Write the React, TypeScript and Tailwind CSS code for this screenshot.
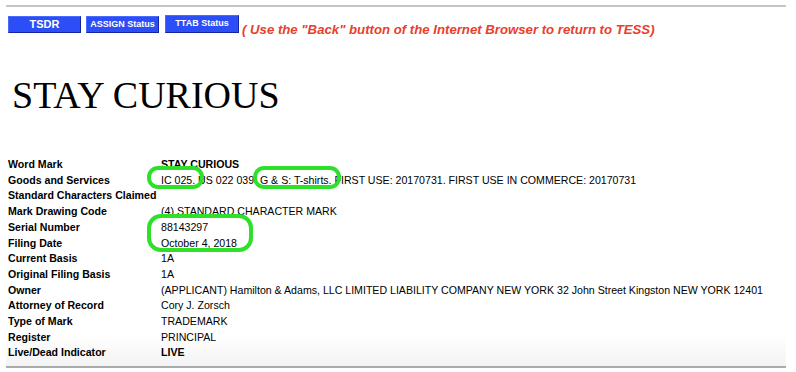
type MarkField = {
    label: string;
    value: string;
    bold?: boolean;
};

const FIELDS: MarkField[] = [
    { label: "Word Mark", value: "STAY CURIOUS", bold: true },
    {
        label: "Goods and Services",
        value: "IC 025. US 022 039. G & S: T-shirts. FIRST USE: 20170731. FIRST USE IN COMMERCE: 20170731",
    },
    { label: "Standard Characters Claimed", value: "" },
    { label: "Mark Drawing Code", value: "(4) STANDARD CHARACTER MARK" },
    { label: "Serial Number", value: "88143297" },
    { label: "Filing Date", value: "October 4, 2018" },
    { label: "Current Basis", value: "1A" },
    { label: "Original Filing Basis", value: "1A" },
    {
        label: "Owner",
        value: "(APPLICANT) Hamilton & Adams, LLC LIMITED LIABILITY COMPANY NEW YORK 32 John Street Kingston NEW YORK 12401",
    },
    { label: "Attorney of Record", value: "Cory J. Zorsch" },
    { label: "Type of Mark", value: "TRADEMARK" },
    { label: "Register", value: "PRINCIPAL" },
    { label: "Live/Dead Indicator", value: "LIVE", bold: true },
];

const NavButton = ({ label, className }: { label: string; className: string }) => (
    <button
        type="button"
        className={`flex items-center justify-center border border-t-[#4a6bff] border-l-[#4a6bff] border-b-[#1524a0] border-r-[#1524a0] bg-[#2c4ef6] font-bold text-white ${className}`}
    >
        {label}
    </button>
);

const App = () => {
    return (
        <div className="h-[372px] w-[796px] overflow-hidden bg-white font-['Liberation_Sans',Arial,sans-serif] text-black">
            <div className="ml-[6px] w-[780px]">
                {/* top rule */}
                <div className="mt-[5px] h-[2px] bg-[#c4c4c4]" />

                {/* nav buttons + back hint */}
                <div className="mt-[8px] flex items-start pl-[2px]">
                    <NavButton label="TSDR" className="mt-px h-[17px] w-[73px] text-[11px]" />
                    <NavButton label="ASSIGN Status" className="ml-[5px] mt-px h-[17px] w-[73px] text-[9px]" />
                    <NavButton label="TTAB Status" className="ml-[6px] h-[18px] w-[74px] text-[9px]" />
                    <p className="ml-[3px] mt-[7px] text-[13.2px] leading-[15px] font-bold italic text-[#e8402c]">
                        ( Use the "Back" button of the Internet Browser to return to TESS)
                    </p>
                </div>

                {/* mark name */}
                <h1 className="mt-[39px] pl-[6px] font-['Liberation_Serif','Times_New_Roman',serif] text-[38px] leading-[38px] font-normal">
                    STAY CURIOUS
                </h1>

                {/* record table */}
                <div className="relative mt-[43px] border-b-2 border-[#ababab] bg-[linear-gradient(to_bottom,#ffffff_0,#ffffff_calc(100%-30px),#f3f3f3_100%)] pb-[5px] pl-[2px]">
                    <div className="grid grid-cols-[153px_1fr] text-[10.6px] leading-[15.7px]">
                        {FIELDS.map((field) => (
                            <div key={field.label} className="contents">
                                <div className="whitespace-nowrap font-bold">{field.label}</div>
                                <div className={`whitespace-nowrap ${field.bold ? "font-bold" : ""}`}>
                                    {field.value}
                                </div>
                            </div>
                        ))}
                    </div>

                    {/* green highlight markers */}
                    <span className="absolute left-[141px] top-[9px] h-[23px] w-[57px] rounded-[11px] border-4 border-[#2fe02a]" />
                    <span className="absolute left-[247px] top-[9px] h-[23px] w-[88px] rounded-[11px] border-4 border-[#2fe02a]" />
                    <span className="absolute left-[141px] top-[57px] h-[38px] w-[106px] rounded-[14px] border-4 border-[#2fe02a]" />
                </div>
            </div>
        </div>
    );
};

export default App;
